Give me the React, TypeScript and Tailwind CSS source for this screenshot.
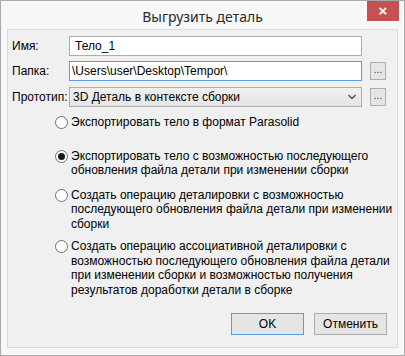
import { useState } from "react"

const font = { fontFamily: '"Liberation Sans", Arial, sans-serif' }

const options = [
  { mt: "mt-[8px]", lines: ["Экспортировать тело в формат Parasolid"] },
  {
    mt: "mt-[19px]",
    lines: ["Экспортировать тело с возможностью последующего", "обновления файла детали при изменении сборки"],
  },
  {
    mt: "mt-[10px]",
    lines: [
      "Создать операцию деталировки с возможностью",
      "последующего обновления файла детали при изменении",
      "сборки",
    ],
  },
  {
    mt: "mt-[8px]",
    lines: [
      "Создать операцию ассоциативной деталировки с",
      "возможностью последующего обновления файла детали",
      "при изменении сборки и возможностью получения",
      "результатов доработки детали в сборке",
    ],
  },
]

const DotsButton = () => (
  <button className="ml-[8px] flex h-[18px] w-[16px] items-end justify-center border border-[#adadad] bg-[#e5e5e5] pb-[4px] text-[10px] leading-none text-[#333]">
    ...
  </button>
)

const App = () => {
  const [choice, setChoice] = useState(1)

  return (
    <div
      className="flex h-[356px] w-[405px] flex-col border border-[#a9a9a9] bg-[#f7f7f7] text-[12px] text-black"
      style={font}
    >
      {/* Title bar */}
      <div className="relative flex h-[28px] shrink-0 items-center justify-center">
        <span
          className="pt-[2px] text-[14px] text-[#2b2b2b]"
          style={{ fontFamily: '"Noto Sans", "Open Sans", sans-serif' }}
        >
          Выгрузить деталь
        </span>
        <div className="absolute right-[5px] top-0 flex h-[20px] w-[32px] items-center justify-center bg-[#c75050] text-[15px] font-bold text-white">
          ×
        </div>
      </div>

      {/* Client area */}
      <div className="mx-[6px] flex h-[319px] flex-col border border-[#dadada] bg-[#f0f0f0] pl-[4px] pt-[6px]">
        <div className="flex h-[20px] items-center">
          <span className="w-[57px]">Имя:</span>
          <div className="flex h-[20px] w-[293px] items-center border border-[#abadb3] bg-white pl-[5px]">
            Тело_1
          </div>
        </div>

        <div className="mt-[5px] flex h-[20px] items-center">
          <span className="w-[57px]">Папка:</span>
          <div className="flex h-[20px] w-[293px] items-center border border-[#569de5] bg-white pl-[2px]">
            \Users\user\Desktop\Tempor\
          </div>
          <DotsButton />
        </div>

        <div className="mt-[6px] flex h-[20px] items-center">
          <span className="w-[57px] whitespace-nowrap">Прототип:</span>
          <div className="flex h-[20px] w-[293px] items-center justify-between border border-[#acacac] bg-gradient-to-b from-[#f0f0f0] to-[#e5e5e5] pl-[3px] pr-[5px]">
            <span>3D Деталь в контексте сборки</span>
            <svg width="8" height="6" viewBox="0 0 8 6">
              <path d="M0.5 1 L4 4.5 L7.5 1" fill="none" stroke="#555" strokeWidth="1.5" />
            </svg>
          </div>
          <DotsButton />
        </div>

        {/* Export options */}
        <div className="ml-[43px] flex flex-col">
          {options.map((opt, i) => (
            <div key={i} className={`${opt.mt} flex cursor-default items-start`} onClick={() => setChoice(i)}>
              <div className="mt-[1px] flex h-[13px] w-[13px] shrink-0 items-center justify-center rounded-full border border-[#707070] bg-white">
                {choice === i && <div className="h-[7px] w-[7px] rounded-full bg-[#1a1a1a]" />}
              </div>
              <div className="ml-[3px] whitespace-nowrap leading-[14.5px]">
                {opt.lines.map((l) => (
                  <div key={l}>{l}</div>
                ))}
              </div>
            </div>
          ))}
        </div>

        {/* Buttons */}
        <div className="mt-auto mb-[12px] mr-[10px] flex justify-end gap-[10px]">
          <button className="h-[22px] w-[73px] border border-[#569de5] bg-[#e5e5e5]">OK</button>
          <button className="h-[22px] w-[73px] border border-[#acacac] bg-[#e5e5e5]">Отменить</button>
        </div>
      </div>
    </div>
  )
}

export default App
